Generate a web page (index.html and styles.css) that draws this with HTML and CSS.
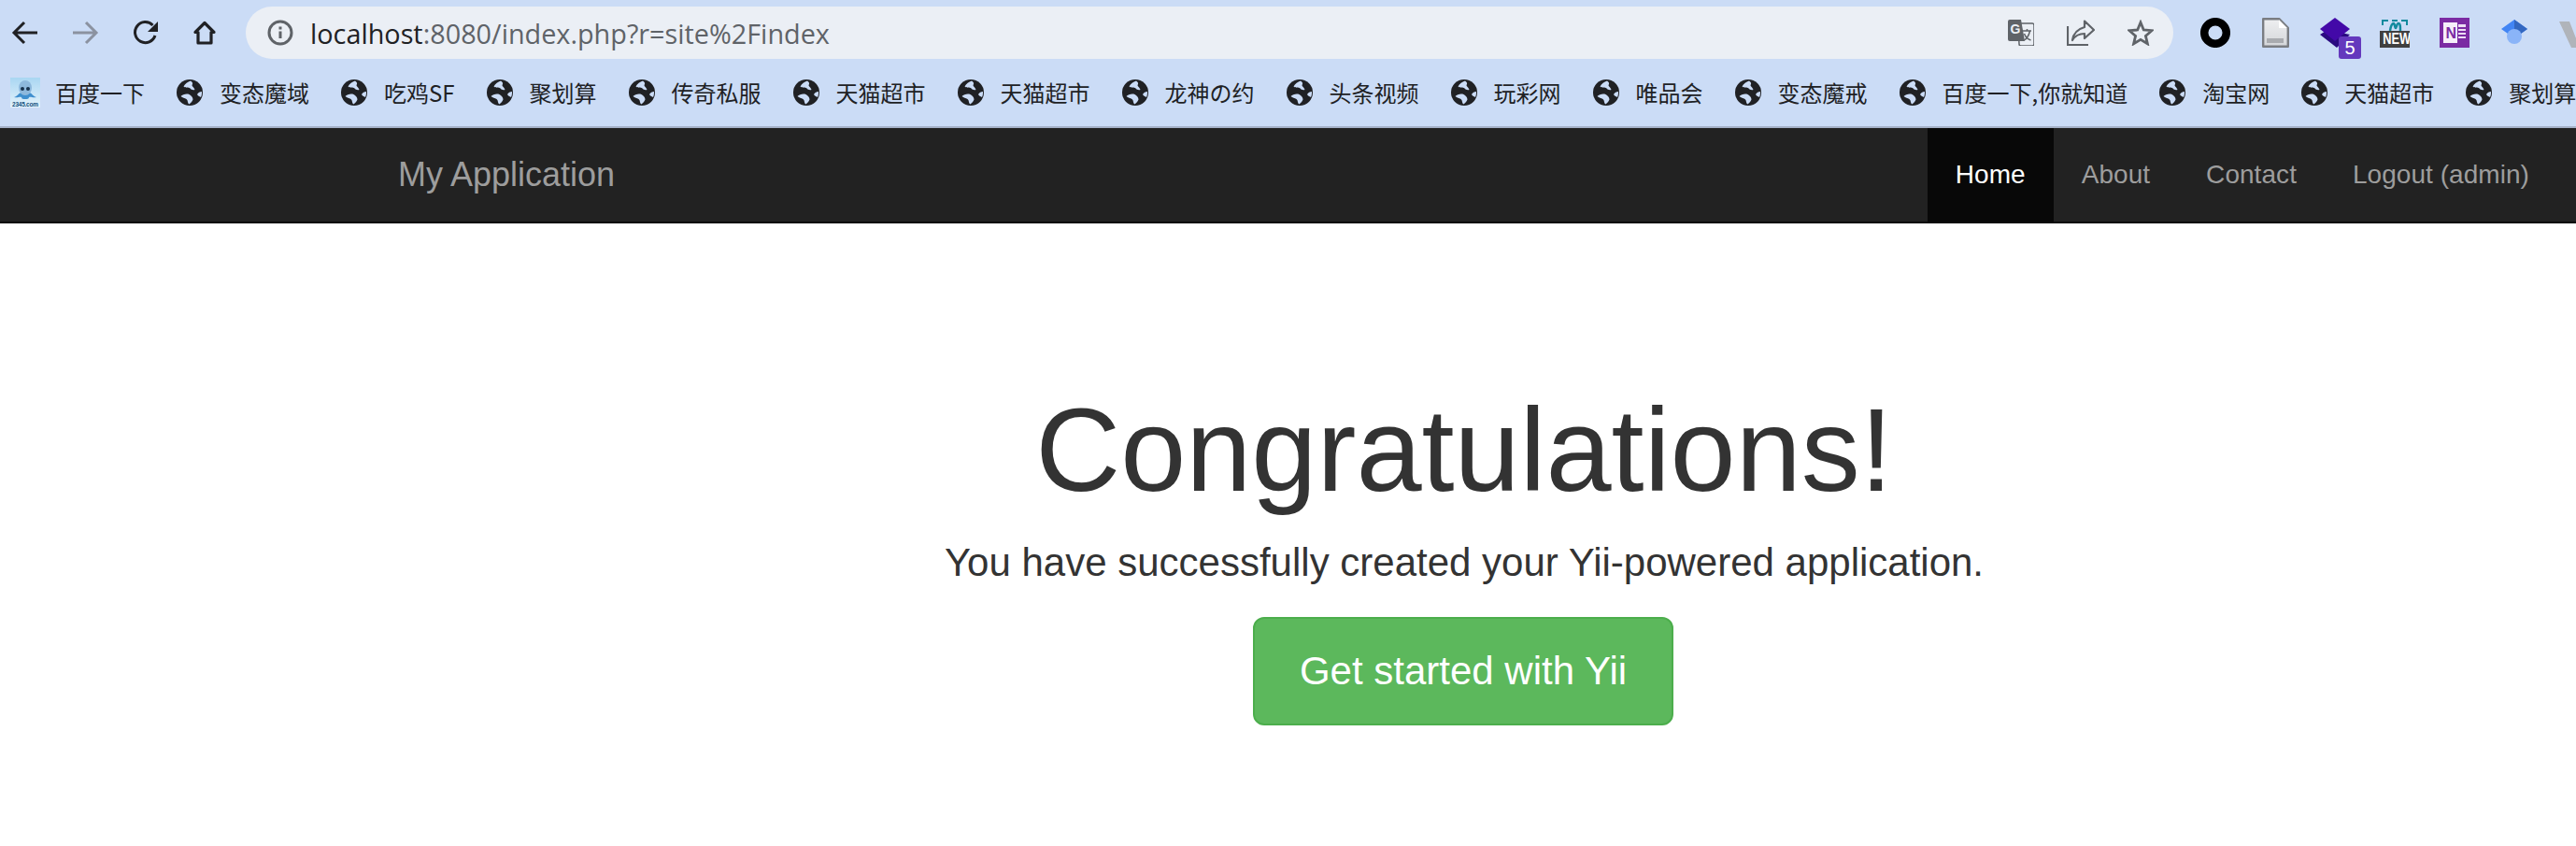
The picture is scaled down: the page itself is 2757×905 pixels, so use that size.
FILE: index.html
```html
<!DOCTYPE html>
<html lang="zh">
<head>
<meta charset="utf-8">
<title>My Application</title>
<link rel="stylesheet" href="styles.css">
</head>
<body>
<svg class="defs" width="0" height="0" aria-hidden="true">
  <symbol id="globe" viewBox="0 0 28 28">
    <circle cx="14" cy="14" r="14" fill="#202124"/>
    <path d="M15 1.500c-3 1-6 3-7.500 6 2 2 5 .5 7 2 1 1.500 3 2 5 1.500-1-3-3-3.500-3-5 1-1.500 1-3-1.500-4.500z" fill="#cbdcf6"/>
    <path d="M4.500 18c2-2 6-3 9-2 2 1 4 3 4 5.500-1 2-2 3.500-4 5-2-1-1-4-3-5.500-2-1.500-4-1-6-3z" fill="#cbdcf6"/>
    <path d="M27 13c-2 0-4 1-5 3 1 2 3 2 4 3 1-2 1-4 1-6z" fill="#cbdcf6"/>
  </symbol>
  <linearGradient id="sky" x1="0" y1="0" x2="0" y2="1">
    <stop offset="0" stop-color="#a9d6f2"/>
    <stop offset="1" stop-color="#e4f3fb"/>
  </linearGradient>
  <linearGradient id="page" x1="0" y1="0" x2="0" y2="1">
    <stop offset="0" stop-color="#eeeff1"/>
    <stop offset="1" stop-color="#d4d6d9"/>
  </linearGradient>
</svg>
<header class="browser">
  <div class="toolbar">
    <svg class="tool" viewBox="0 0 40 40"><path d="M33 20H9M19 9 8 20l11 11" fill="none" stroke="#202124" stroke-width="3"/></svg>
    <svg class="tool" viewBox="0 0 40 40"><path d="M7 20h24M21 9l11 11-11 11" fill="none" stroke="#8b92a0" stroke-width="3"/></svg>
    <svg class="tool" viewBox="0 0 40 40"><path d="M31 23a11 11 0 1 1-2.500-11" fill="none" stroke="#202124" stroke-width="3"/><path d="M34 8v11H23z" fill="#202124"/></svg>
    <svg class="tool" viewBox="0 0 40 40"><path d="M20 9.500 10 19.500h3V31h14V19.500h3z" fill="none" stroke="#202124" stroke-width="3.200" stroke-linejoin="round"/></svg>
    <div class="omnibox">
      <svg class="info" viewBox="0 0 28 28"><circle cx="14" cy="14" r="12" fill="none" stroke="#5f6368" stroke-width="3"/><path d="M14 12.500v7.500M14 7.500v3" stroke="#5f6368" stroke-width="3"/></svg>
      <div class="url"><span class="host">localhost</span>:8080/index.php?r=site%2Findex</div>
      <div class="omni-actions">
        <svg class="translate" viewBox="0 0 28 28"><path d="M11 4h15q2 0 2 2v20q0 2-2 2H14q-2 0-2-2z" fill="#ebeff5" stroke="#5f6368" stroke-width="1.500"/><path d="M2 0h12l4 23H2q-2 0-2-2V2q0-2 2-2z" fill="#5f6368"/><text class="g" x="2.500" y="15">G</text><path d="M16 12h9M20.500 10v2M23.500 12c-1 5-3 8-6 10M17.500 15c1 3 4 6 7 7" fill="none" stroke="#5f6368" stroke-width="1.500"/></svg>
        <svg class="share" viewBox="0 0 30 28"><path d="M1 7v20h22" fill="none" stroke="#5f6368" stroke-width="2.200"/><path d="M19 1.500 29 11l-10 9v-5C14 15 9 17 6 22c1-7 6-12 13-14z" fill="none" stroke="#5f6368" stroke-width="2.200" stroke-linejoin="round"/></svg>
        <svg class="star" viewBox="0 0 28 28"><path d="M14 3l3.300 8 8.700.7-6.600 5.700 2 8.400L14 21.300 6.600 25.800l2-8.400L2 11.700l8.700-.7z" fill="none" stroke="#5f6368" stroke-width="2.800"/></svg>
      </div>
    </div>
    <div class="extensions">
      <svg class="ext" viewBox="0 0 32 32"><circle cx="16" cy="16" r="11.800" fill="none" stroke="#000" stroke-width="8.500"/></svg>
      <svg class="ext" viewBox="0 0 32 32"><path d="M3.200 1.200h17l9.600 9.600v20H3.200z" fill="url(#page)" stroke="#7a7d82" stroke-width="2.400" stroke-linejoin="round"/><path d="M20 2v9h9" fill="#fff"/><path d="M7 22h18v5H7z" fill="#a9abaf"/></svg>
      <div class="ext-badged">
        <svg class="ext" viewBox="0 0 32 32"><path d="M0 18l8-5 24 5-14 14z" fill="#2a0a80"/><path d="M16 0l16 12-16 13L0 12z" fill="#4309a8"/></svg>
        <span class="badge">5</span>
      </div>
      <div class="ext-new">
        <svg class="new-top" viewBox="0 0 32 12"><path d="M3 6V1h6M13 1h6M23 1h6v5" fill="none" stroke="#138a9e" stroke-width="2"/><path d="M11 12c1-7 3-8 4-8s1 5 2 5 1-5 3-5 2 4 2 8" fill="none" stroke="#138a9e" stroke-width="2.500"/></svg>
        <span class="new-label"><span class="new-word">NEW</span></span>
      </div>
      <svg class="ext" viewBox="0 0 32 32"><path d="M0 0h32v32H0z" fill="#7b2ba3"/><path d="M4 5h15v22H4z" fill="#f6eefa"/><path d="M20 7h8v3h-8zM20 12h8v2h-8zM20 16h8v2h-8zM20 20h8v2h-8z" fill="#ecddf4"/><text class="onenote" x="6.500" y="21.500">N</text></svg>
      <svg class="ext" viewBox="0 0 32 28"><path d="M16 0l14 10-14 10L2 10z" fill="#4285f4"/><path d="M16 0l14 10-14 10z" fill="#3367c0"/><circle cx="16" cy="18" r="8" fill="#8ab4f8"/></svg>
      <svg class="ext ext-v" viewBox="0 0 32 28"><path d="M0 0h11l7 18 7-18h7L20 28h-7z" fill="#b0b4ba"/></svg>
    </div>
  </div>
  <nav class="bookmarks">
    <a class="mark mark-first"><svg class="logo2345" viewBox="0 0 32 32"><rect width="32" height="32" fill="url(#sky)"/><path d="M4 21c4-1 5-5 8-5h8c3 0 4 4 8 5-4 1-6-1-8 0 0 2-2 2-4 2s-4 0-4-2c-2-1-4 1-8 0z" fill="#3f8fce"/><ellipse cx="16" cy="11" rx="7" ry="8" fill="#8db8dc"/><circle cx="13" cy="12" r="2" fill="#17324d"/><circle cx="19" cy="12" r="2" fill="#17324d"/><text class="logo-text" x="2" y="30.500" textLength="28">2345.com</text></svg>百度一下</a>
    <a class="mark"><svg class="globe"><use href="#globe"/></svg>变态魔域</a>
    <a class="mark"><svg class="globe"><use href="#globe"/></svg>吃鸡SF</a>
    <a class="mark"><svg class="globe"><use href="#globe"/></svg>聚划算</a>
    <a class="mark"><svg class="globe"><use href="#globe"/></svg>传奇私服</a>
    <a class="mark"><svg class="globe"><use href="#globe"/></svg>天猫超市</a>
    <a class="mark"><svg class="globe"><use href="#globe"/></svg>天猫超市</a>
    <a class="mark"><svg class="globe"><use href="#globe"/></svg>龙神の约</a>
    <a class="mark"><svg class="globe"><use href="#globe"/></svg>头条视频</a>
    <a class="mark"><svg class="globe"><use href="#globe"/></svg>玩彩网</a>
    <a class="mark"><svg class="globe"><use href="#globe"/></svg>唯品会</a>
    <a class="mark"><svg class="globe"><use href="#globe"/></svg>变态魔戒</a>
    <a class="mark"><svg class="globe"><use href="#globe"/></svg>百度一下,你就知道</a>
    <a class="mark"><svg class="globe"><use href="#globe"/></svg>淘宝网</a>
    <a class="mark"><svg class="globe"><use href="#globe"/></svg>天猫超市</a>
    <a class="mark"><svg class="globe"><use href="#globe"/></svg>聚划算</a>
  </nav>
</header>
<div class="navbar">
  <div class="container nav-inner">
    <a class="brand">My Application</a>
    <ul class="nav">
      <li class="nav-item active">Home</li>
      <li class="nav-item">About</li>
      <li class="nav-item">Contact</li>
      <li class="nav-item">Logout (admin)</li>
    </ul>
  </div>
</div>
<main class="container jumbotron">
  <h1 class="title">Congratulations!</h1>
  <p class="lead">You have successfully created your Yii-powered application.</p>
  <a class="btn">Get started with Yii</a>
</main>
</body>
</html>
```

FILE: styles.css
```css
* { box-sizing: border-box; }
html, body { margin: 0; height: 100%; overflow: hidden; background: #fff; }
body { width: 2757px; font-family: "Liberation Sans", Arial, sans-serif; color: #333; }
.defs { position: absolute; }

.browser { background: #cbdcf6; height: 137px; border-bottom: 2px solid #a5b1c7; overflow: hidden; }
.toolbar { display: flex; align-items: flex-start; gap: 24px; padding: 7px 0 0 7px; height: 70px; }
.tool { width: 40px; height: 40px; margin-top: 8px; flex: none; }

.omnibox { flex: none; width: 2063px; height: 56px; border-radius: 28px; background: #ebeff5; display: flex; align-items: center; padding-left: 23px; }
.info { width: 28px; height: 28px; flex: none; }
.url { margin-left: 18px; font-family: "Open Sans", "Noto Sans", sans-serif; font-size: 28.800px; color: #5f6368; white-space: nowrap; }
.host { color: #202124; }
.omni-actions { margin-left: auto; display: flex; align-items: center; gap: 35px; padding-right: 21px; }
.translate { width: 28px; height: 28px; }
.share { width: 30px; height: 28px; }
.star { width: 28px; height: 28px; }
.g { font: bold 14px "Liberation Sans", sans-serif; fill: #ebeff5; }

.extensions { display: flex; align-items: flex-start; margin-left: 5px; gap: 32px; padding-top: 12px; flex: none; }
.ext { width: 32px; height: 32px; display: block; flex: none; }
.ext-badged { position: relative; width: 32px; height: 32px; flex: none; }
.badge { position: absolute; left: 20px; top: 20px; width: 24px; height: 24px; border-radius: 3px; background: #6438bd; color: #fff; font: 20px/24px "Liberation Sans", sans-serif; text-align: center; }
.ext-new { width: 32px; height: 30px; margin-top: 2px; flex: none; display: flex; flex-direction: column; }
.new-top { width: 32px; height: 12px; flex: none; }
.new-label { display: block; background: #3f3f3f; height: 18px; text-align: center; overflow: hidden; }
.new-word { display: block; color: #fff; font: bold 16px/18px "Liberation Sans", sans-serif; transform: scaleX(0.8); }
.onenote { font: bold 16px "Liberation Sans", sans-serif; fill: #7b2ba3; }
.ext-v { margin-top: 2px; }

.bookmarks { display: flex; align-items: center; padding: 13px 0 0 11px; gap: 34px; height: 45px; white-space: nowrap; font-family: "Noto Sans CJK SC", "Liberation Sans", sans-serif; font-size: 24px; line-height: 32px; color: #202124; }
.mark { display: flex; align-items: center; gap: 18px; flex: none; }
.mark-first { gap: 16px; }
.globe { width: 28px; height: 28px; flex: none; }
.logo2345 { width: 32px; height: 32px; flex: none; }
.logo-text { font: bold 6.500px "Liberation Sans", sans-serif; fill: #12507f; }

.navbar { height: 102px; background: #222; border-bottom: 2px solid #080808; }
.container { width: 2340px; margin-left: 397px; }
.nav-inner { display: flex; justify-content: space-between; height: 100px; padding-left: 29px; }
.brand { font-size: 36px; line-height: 100px; color: #9d9d9d; }
.nav { display: flex; list-style: none; margin: 0; padding: 0; }
.nav-item { padding: 0 30px; font-size: 28px; line-height: 100px; letter-spacing: 0.050px; color: #9d9d9d; white-space: nowrap; }
.active { background: #080808; color: #fff; }

.jumbotron { padding-top: 174px; text-align: center; }
.title { margin: 0 0 20px; font-size: 126px; line-height: 1.1; font-weight: 400; color: #333; }
.lead { margin: 0 0 28px; font-size: 42px; line-height: 60px; color: #333; }
.btn { display: inline-block; margin-right: 2px; padding: 28px 48px; border: 2px solid #4cae4c; border-radius: 12px; background: #5cb85c; color: #fff; font-size: 42px; line-height: 56px; }
```
